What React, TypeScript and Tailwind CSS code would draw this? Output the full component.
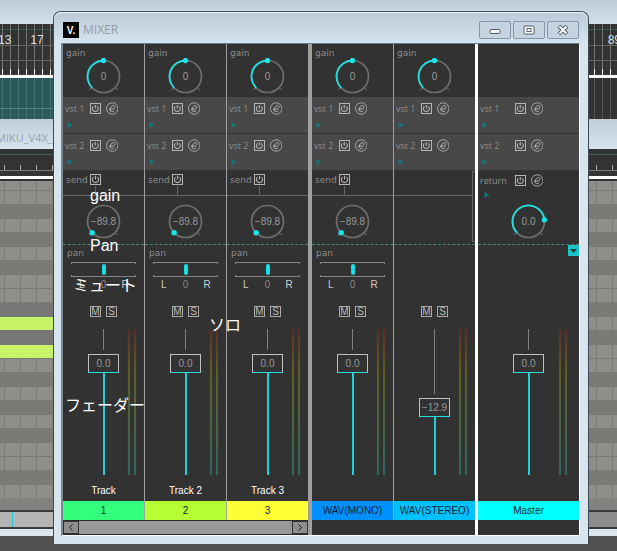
import clsx from "clsx";
import type { ReactNode } from "react";

interface Channel {
  name: string;
  label: string;
  color: string;
  fader: string;
  faderOffset: number;
  send?: boolean;
}

const TRACKS: Channel[] = [
  { name: "Track", label: "1", color: "bg-[#33ff7a]", fader: "0.0", faderOffset: 25, send: true },
  { name: "Track 2", label: "2", color: "bg-[#b5ff33]", fader: "0.0", faderOffset: 25, send: true },
  { name: "Track 3", label: "3", color: "bg-[#ffff33]", fader: "0.0", faderOffset: 25, send: true },
];

const WAVS: Channel[] = [
  { name: "", label: "WAV(MONO)", color: "bg-[#0090ff]", fader: "0.0", faderOffset: 25, send: true },
  { name: "", label: "WAV(STEREO)", color: "bg-[#00c0ff]", fader: "−12.9", faderOffset: 69 },
];

// Piano roll keys from top to bottom, true = black key
const KEYS = [
  false, true, false, true, false, true, false, false, true, false, true,
  false, false, true, false, true, false, true, false, false, true, false,
];

const LABEL = "font-['DejaVu_Sans',sans-serif] text-[9px] leading-[10px] text-[#8c8c8c]";

function pointAt(angle: number, r: number) {
  const rad = ((angle - 90) * Math.PI) / 180;
  return [18.5 + r * Math.cos(rad), 18.5 + r * Math.sin(rad)];
}

/** Rotary knob. The angle is in degrees, 0 = straight up, -135 = minimum. */
function Knob({ label, value, angle }: { label: string; value: string; angle: number }) {
  const [sx, sy] = pointAt(-135, 16);
  const [ex, ey] = pointAt(angle, 16);
  const large = angle + 135 > 180 ? 1 : 0;

  return (
    <div className="relative mx-auto size-[37px]">
      <svg viewBox="0 0 37 37" className="size-full" fill="none">
        <circle cx="18.5" cy="18.5" r="16" stroke="#6e6e6e" strokeWidth="1.7" />
        <path d="M7 30L4 32M30 30L33 32" stroke="#606060" strokeWidth="1.4" />
        {angle > -135 && (
          <path
            d={`M${sx} ${sy}A16 16 0 ${large} 1 ${ex} ${ey}`}
            stroke="#1fe0e0"
            strokeWidth="1.8"
          />
        )}
        <circle cx={ex} cy={ey} r="2.7" fill="#14e6ea" />
      </svg>
      <span className="absolute inset-0 flex items-center justify-center text-[10px] text-[#999]">
        {value}
      </span>
      <input
        type="range"
        aria-label={label}
        min={-135}
        max={135}
        defaultValue={angle}
        className="absolute inset-0 size-full opacity-0"
      />
    </div>
  );
}

function PowerButton() {
  return (
    <button aria-label="Power" className="size-[11px] border border-[#b4b4b4] text-[#b4b4b4]">
      <svg viewBox="0 0 9 9" className="size-full" fill="none" stroke="currentColor">
        <path d="M4.5 .8v3.7M2.5 2.2a3.1 3.1 0 1 0 4 0" strokeWidth="1.1" />
      </svg>
    </button>
  );
}

function EditButton() {
  return (
    <button aria-label="Edit" className="size-[13px] text-[#b8b8b8]">
      <svg viewBox="0 0 13 13" className="size-full" fill="none" stroke="currentColor">
        <circle cx="6.5" cy="6.5" r="6" strokeWidth=".9" />
        <path d="M3 7.2H7.2C9 6.8 9.6 5.4 9.3 4.4C8.8 3 6.6 3.3 5.5 4.8C4.2 6.6 3.8 9 5.2 9.7C6.3 10.1 7.7 9.5 8.6 8.6" />
      </svg>
    </button>
  );
}

function Arrow() {
  return (
    <svg viewBox="0 0 5 6" className="size-1.5 fill-[#147678]">
      <path d="M0 0L5 3L0 6Z" />
    </svg>
  );
}

function SlotHeader({ children, edit }: { children: ReactNode; edit?: boolean }) {
  return (
    <div className="grid h-[13px] grid-cols-[1fr_29px_1fr] items-center">
      {children}
      <div className="flex items-center gap-[5px] pl-px">
        <PowerButton />
        {edit && <EditButton />}
      </div>
    </div>
  );
}

function VstSlot({ index }: { index: number }) {
  return (
    <div className="h-9 bg-[#484848] pt-[5px]">
      <SlotHeader edit>
        <span className="pl-0.5 font-['Open_Sans',sans-serif] text-[9px] leading-[10px] whitespace-nowrap text-[#8f8f8f]">
          vst {index}
        </span>
      </SlotHeader>
      <div className="pt-[7px] pl-1">
        <Arrow />
      </div>
    </div>
  );
}

function Send({ active }: { active?: boolean }) {
  if (!active) {
    return (
      <div className="flex h-[74px] items-start">
        <div className="h-[26px] grow border-b border-[#666]" />
        <div className="mt-px h-[71px] w-[3px] border-y border-l border-[#666]" />
      </div>
    );
  }
  return (
    <div className="h-[74px]">
      <div className="h-[26px] border-b border-[#666] pt-[3px]">
        <SlotHeader>
          <span className={clsx(LABEL, "pl-[3px]")}>send</span>
        </SlotHeader>
        <div className="mx-auto h-[9px] w-[17px] border-l border-[#666]" />
      </div>
      <div className="pt-[7px]">
        <Knob label="Send level" value="−89.8" angle={-135} />
      </div>
    </div>
  );
}

function Return() {
  return (
    <div className="h-[74px] pt-1">
      <SlotHeader edit>
        <span className="pl-0.5 font-['Open_Sans',sans-serif] text-[9px] leading-[10px] text-[#8f8f8f]">
          return
        </span>
      </SlotHeader>
      <div className="h-4 pt-[5px] pl-1.5">
        <Arrow />
      </div>
      <Knob label="Return level" value="0.0" angle={84} />
    </div>
  );
}

function Pan() {
  return (
    <>
      <div className={clsx(LABEL, "h-[17px] pt-[3px] pl-1")}>pan</div>
      <div className="relative mx-2 h-[15px]">
        <div className="flex h-full flex-col justify-between">
          <div className="h-0.5 border-x border-t border-[#858585]" />
          <div className="h-0.5 border-x border-b border-[#858585]" />
        </div>
        <div className="absolute inset-0 flex items-center justify-center">
          <div className="h-[11px] w-1 rounded-sm bg-[#14e0e6]" />
        </div>
        <input type="range" aria-label="Pan" className="absolute inset-0 size-full opacity-0" />
      </div>
      <div className="grid grid-cols-3 px-2 pt-[3px] text-center text-[10px] leading-[10px] text-[#ccc]">
        <span>L</span>
        <span className="text-[#888]">0</span>
        <span>R</span>
      </div>
    </>
  );
}

function Meter() {
  return (
    <div className="h-full w-0.5 bg-linear-to-b from-[#5c2a26] via-[#5f5e24] via-30% to-[#2d6665] shadow-[0_0_2px_#42422c]" />
  );
}

function Fader({ value, offset, master }: { value: string; offset: number; master?: boolean }) {
  return (
    <div className="relative grid h-[146px] grid-cols-[1fr_31px_1fr]">
      <div className="col-start-2 flex flex-col items-center">
        <div className="shrink-0 pb-1" style={{ height: offset }}>
          <div className="h-full w-px bg-[#808080]" />
        </div>
        <div className="flex h-[19px] w-full shrink-0 items-center justify-center border border-[#c0c0c0] border-b-[#1fe0e0] text-[10px] text-[#999]">
          {value}
        </div>
        <div className="w-0.5 grow bg-[#22cdd3]" />
      </div>
      <div className={clsx("flex justify-end gap-1", master ? "pr-3" : "pr-2")}>
        <Meter />
        <Meter />
      </div>
      <input
        type="range"
        aria-label="Volume"
        className="absolute inset-0 size-full opacity-0"
      />
    </div>
  );
}

function MuteSolo() {
  const box =
    "flex size-[11px] items-center justify-center border border-[#aaa] text-[10px] leading-[9px] text-[#bbb]";
  return (
    <div className="flex justify-center gap-[5px] pt-[11px]">
      <button aria-label="Mute" className={box}>M</button>
      <button aria-label="Solo" className={box}>S</button>
    </div>
  );
}

function Strip({ channel, master }: { channel: Channel; master?: boolean }) {
  return (
    <div className="min-w-0 flex-1 bg-[#323232]">
      <div className="h-[53px]">
        {!master && (
          <>
            <div className={clsx(LABEL, "h-3.5 pt-1 pl-[3px]")}>gain</div>
            <Knob label="Gain" value="0" angle={0} />
          </>
        )}
      </div>
      <VstSlot index={1} />
      <div className="h-px" />
      <VstSlot index={2} />
      {master ? <Return /> : <Send active={channel.send} />}
      <div className="border-t border-dashed border-[#3f8a84]" />
      <div className="h-[50px]">
        {channel.send && <Pan />}
        {master && (
          <button
            aria-label="Collapse"
            className="ml-auto flex size-[11px] items-center justify-center bg-[#1cc4c8]"
          >
            <svg viewBox="0 0 7 4" className="w-[7px] fill-[#123c3e]">
              <path d="M0 0H7L3.5 4Z" />
            </svg>
          </button>
        )}
      </div>
      <div className="h-[34px]">{!master && <MuteSolo />}</div>
      <Fader value={channel.fader} offset={channel.faderOffset} master={master} />
      <div className="flex h-[26px] items-end justify-center pb-[5px] text-[10px] leading-[10px] text-white">
        {channel.name}
      </div>
      <div
        className={clsx(
          "flex h-[19px] items-center justify-center text-[10px] leading-[10px] text-[#052433]",
          channel.color,
        )}
      >
        {channel.label}
      </div>
    </div>
  );
}

function TrackScrollbar() {
  const button =
    "flex w-4 items-center justify-center border border-[#333] bg-[#8e8e8e] text-[#111]";
  return (
    <div className="flex h-[15px] justify-between border-y border-[#2a2a2a] bg-[#989898]">
      <button aria-label="Scroll left" className={button}>
        <svg viewBox="0 0 4 7" className="h-[7px]" fill="none" stroke="currentColor">
          <path d="M3.5 .5L.5 3.5L3.5 6.5" />
        </svg>
      </button>
      <button aria-label="Scroll right" className={button}>
        <svg viewBox="0 0 4 7" className="h-[7px]" fill="none" stroke="currentColor">
          <path d="M.5 .5L3.5 3.5L.5 6.5" />
        </svg>
      </button>
    </div>
  );
}

function WindowButton({ label, children }: { label: string; children: ReactNode }) {
  return (
    <button
      aria-label={label}
      className="flex h-[18px] w-8 items-center justify-center rounded-xs border border-[#8596a8] bg-[#c5d3e0]"
    >
      <svg viewBox="0 0 12 10" className="h-2.5 w-3" fill="none">
        {children}
      </svg>
    </button>
  );
}

/** Sequencer window that lies behind the mixer. */
function Backdrop() {
  return (
    <div className="absolute inset-0 flex flex-col overflow-hidden bg-[#505050]">
      <div className="h-6 bg-linear-to-b from-[#bfcdd9] to-[#d2e0ec]" />

      {/* Measure ruler */}
      <div className="flex h-[51px] flex-col bg-[repeating-linear-gradient(90deg,#333_0_2px,#777_2px_3px,#333_3px_8px)]">
        <div className="h-1.5 border-b border-[#38605e]" />
        <div className="flex h-4 items-center justify-between border-b border-[#666] pt-1 text-xs leading-3 text-[#ddd]">
          <div className="-ml-0.5 flex gap-[19px]">
            <span>13</span>
            <span>17</span>
          </div>
          <span className="-mr-1">89</span>
        </div>
        <div className="h-[15px] border-b border-[#666]" />
        <div className="mt-auto h-1.5 bg-[repeating-linear-gradient(90deg,#333_0_2px,#fff_2px_3px,#333_3px_8px)]" />
      </div>
      <div className="h-[3px] bg-white" />
      <div className="flex h-[41px] justify-between bg-[repeating-linear-gradient(90deg,#333_0_2px,#555_2px_3px,#333_3px_8px)]">
        <div className="w-1/2 bg-[repeating-linear-gradient(90deg,#2b5a5d_0_2px,#45706f_2px_3px,#2b5a5d_3px_8px)]">
          <div className="h-[31px] border-b border-[#528080]" />
        </div>
      </div>
      <div className="flex h-[30px] items-center overflow-hidden bg-linear-to-b from-[#bfcdd9] to-[#d6e4f0] pt-2 font-['Open_Sans',sans-serif] text-[11px] text-[#98a2ab]">
        <span className="-ml-1">MIKU_V4X_O</span>
      </div>

      {/* Beat ruler */}
      <div className="h-[27px] bg-[#333]">
        <div className="h-1.5 border-b border-[#38605e]" />
        <div className="mt-2.5 h-1.5 border-b border-[#777] bg-[repeating-linear-gradient(90deg,#333_0_4px,#aaa_4px_5px,#333_5px_16px)]" />
      </div>
      <div className="h-[3px] bg-white" />
      <div className="h-0.5 bg-[#333]" />

      {/* Piano roll */}
      <div className="relative bg-[#8e8e8b] pt-[9px]">
        {KEYS.map((black, i) => (
          <div
            key={i}
            className={clsx("h-3.5 border-t border-[#7a7a72]", black ? "bg-[#7a7a77]" : "bg-[#8e8e8b]")}
          />
        ))}
        <div className="absolute inset-0 bg-[repeating-linear-gradient(90deg,transparent_0_4px,#7a7a70_4px_5px,transparent_5px_16px)]" />
        <div className="absolute top-[122px] left-0 h-3.5 w-1/4 bg-[#767676]" />
        <div className="absolute top-[136px] left-0 h-[13px] w-1/4 bg-[#c8f268]" />
        <div className="absolute top-[149px] left-0 h-[15px] w-1/4 bg-[#767676]" />
        <div className="absolute top-[164px] left-0 h-[13px] w-1/4 bg-[#c8f268]" />
      </div>
      <div className="h-3 bg-[#828280]" />
      <div className="flex h-[19px] border-y-2 border-[#3a3a3a] bg-[#8c8c8c]">
        <div className="w-1/2 bg-[#b4b4b4] pl-3">
          <div className="h-full w-px bg-[#22ccd0]" />
        </div>
      </div>
      <div className="h-[7px] bg-[#d8e4ee]" />
    </div>
  );
}

export default function App() {
  return (
    <div className="relative min-h-screen overflow-hidden pt-[11px] pr-7 pb-[7px] pl-[53px] font-['Liberation_Sans','Noto_Sans_CJK_JP',sans-serif]">
      <Backdrop />

      <main className="relative rounded-t-lg border border-b-0 border-[#3c4a54] bg-[#d8e4ee] pr-2 pb-2 pl-[7px]">
        <header className="-mr-2 -ml-[7px] flex h-[31px] items-center gap-1 rounded-t-lg border-t border-[#eef4f8] bg-linear-to-b from-[#bccbd8] to-[#d6e4f0] pt-1 pr-[9px] pl-[9px]">
          <span className="flex size-4 items-center justify-center bg-black text-[10px] font-bold text-white">
            V.
          </span>
          <h1 className="font-['Open_Sans',sans-serif] text-xs text-[#939da6]">MIXER</h1>
          <div className="ml-auto flex gap-0.5">
            <WindowButton label="Minimize">
              <rect x="1" y="4.5" width="10" height="4" rx="1" fill="#fff" stroke="#52606d" />
            </WindowButton>
            <WindowButton label="Maximize">
              <rect x="1" y="1" width="10" height="8" rx="1" fill="#fff" stroke="#52606d" />
              <rect x="4" y="3.5" width="4" height="3" stroke="#52606d" />
            </WindowButton>
            <WindowButton label="Close">
              <path d="M2 1L10 9M10 1L2 9" stroke="#52606d" strokeWidth="4" />
              <path d="M2.5 1.5L9.5 8.5M9.5 1.5L2.5 8.5" stroke="#fff" strokeWidth="2" />
            </WindowButton>
          </div>
        </header>

        <div className="relative flex border-t border-r border-b border-l-2 border-t-[#6f7a82] border-r-white border-b-white border-l-[#7c868d] bg-[#323232]">
          <section className="grow basis-[249px] border-r-4 border-[#a0a0a0]">
            <div className="flex gap-px bg-[#a0a0a0]">
              {TRACKS.map((track) => (
                <Strip key={track.label} channel={track} />
              ))}
            </div>
            <TrackScrollbar />
          </section>
          <section className="grow basis-[166px] border-r-3 border-white">
            <div className="flex gap-px bg-[#a0a0a0]">
              {WAVS.map((wav) => (
                <Strip key={wav.label} channel={wav} />
              ))}
            </div>
          </section>
          <section className="flex grow basis-[101px] items-start">
            <Strip
              master
              channel={{ name: "", label: "Master", color: "bg-[#00ffff]", fader: "0.0", faderOffset: 25 }}
            />
          </section>

          {/* Callouts laid over the strips */}
          <div className="pointer-events-none absolute inset-0 text-base leading-4 text-white">
            <span className="absolute top-36 left-[27px]">gain</span>
            <span className="absolute top-[194px] left-[27px]">Pan</span>
            <span className="absolute top-[234px] left-2.5">ミュート</span>
            <span className="absolute top-[274px] left-[146px]">ソロ</span>
            <span className="absolute top-[354px] left-0.5">フェーダー</span>
          </div>
        </div>
      </main>
    </div>
  );
}
